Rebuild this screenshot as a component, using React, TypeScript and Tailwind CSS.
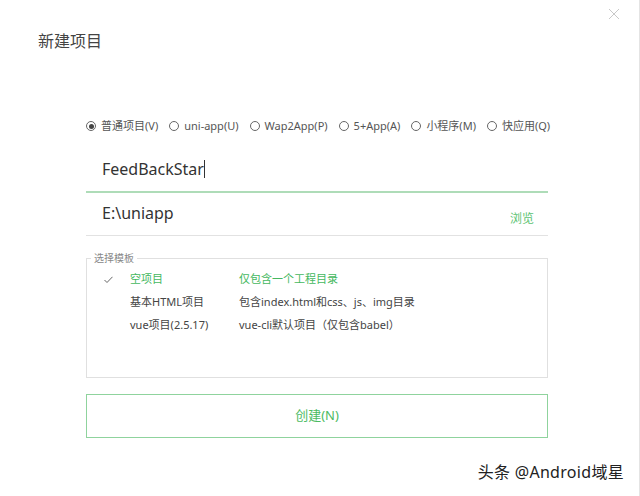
import React from 'react';

const types = ['普通项目(V)', 'uni-app(U)', 'Wap2App(P)', '5+App(A)', '小程序(M)', '快应用(Q)'];

const templates = [
  { name: '空项目', desc: '仅包含一个工程目录', active: true },
  { name: '基本HTML项目', desc: '包含index.html和css、js、img目录', active: false },
  { name: 'vue项目(2.5.17)', desc: 'vue-cli默认项目（仅包含babel）', active: false },
];

export default function App() {
  return (
    <div
      className="relative w-[640px] h-[496px] bg-white overflow-hidden border-r border-[#e4e4e4] text-[#333]"
      style={{ fontFamily: '"Noto Sans", "Noto Sans CJK SC", sans-serif' }}
    >
      <div className="absolute right-[19px] top-[8px] text-[#c8c8c8]">
        <svg width="12" height="12" viewBox="0 0 12 12" stroke="currentColor" strokeWidth="1">
          <path d="M1 1l10 10M11 1L1 11" />
        </svg>
      </div>

      <div className="pl-[38px] pt-[30px] text-[16px] leading-[22px] text-[#444]">新建项目</div>

      <div className="px-[86px] w-[634px] pt-[63px]">
        <div className="flex items-center h-[22px] text-[11px] text-[#555]">
          {types.map((t, i) => (
            <label key={t} className="flex items-center mr-[11px] whitespace-nowrap">
              <span className="w-[10px] h-[10px] rounded-full border border-[#666] flex items-center justify-center mr-[5px]">
                {i === 0 && <span className="w-[5px] h-[5px] rounded-full bg-[#444]" />}
              </span>
              {t}
            </label>
          ))}
        </div>

        <div className="mt-[10px] h-[46px] border-b-2 border-[#aedcb8] flex items-center pl-[16px] text-[16px] text-[#333]">
          FeedBackStar<span className="w-px h-[18px] bg-[#333]" />
        </div>

        <div className="h-[43px] border-b border-[#e2e2e2] flex items-center pl-[16px] text-[16px] text-[#333] relative">
          <span className="-mt-[2px]">E:\uniapp</span>
          <span className="ml-auto mr-[14px] mt-[10px] text-[12px] text-[#5cc372]">浏览</span>
        </div>

        <fieldset className="mt-[15px] h-[127px] border border-[#e0e0e0] m-0 p-0">
          <legend className="ml-[4px] px-[3px] text-[10px] text-[#888] leading-[14px]">选择模板</legend>
          <div className="mt-[3px] pl-[14px]">
            {templates.map((t) => (
              <div
                key={t.name}
                className={`flex items-center h-[23px] text-[11px] ${t.active ? 'text-[#45b860]' : 'text-[#444]'}`}
              >
                <span className="w-[29px] pl-[3px] text-[#666]">
                  {t.active && (
                    <svg width="9" height="8" viewBox="0 0 9 8" fill="none" stroke="#666" strokeWidth="1">
                      <path d="M0.5 4l2.5 2.5L8.5 0.8" />
                    </svg>
                  )}
                </span>
                <span className="w-[109px]">{t.name}</span>
                <span>{t.desc}</span>
              </div>
            ))}
          </div>
        </fieldset>

        <button className="mt-[16px] w-full h-[44px] border border-[#8fd39d] text-[#4cbb62] text-[13px] bg-white">
          创建(N)
        </button>
      </div>

      <div
        className="absolute right-[15px] bottom-[12px] text-[16px] text-[#222] tracking-[0.3px]"
        style={{ textShadow: '0 0 2px #fff' }}
      >
        头条 @Android域星
      </div>
    </div>
  );
}
